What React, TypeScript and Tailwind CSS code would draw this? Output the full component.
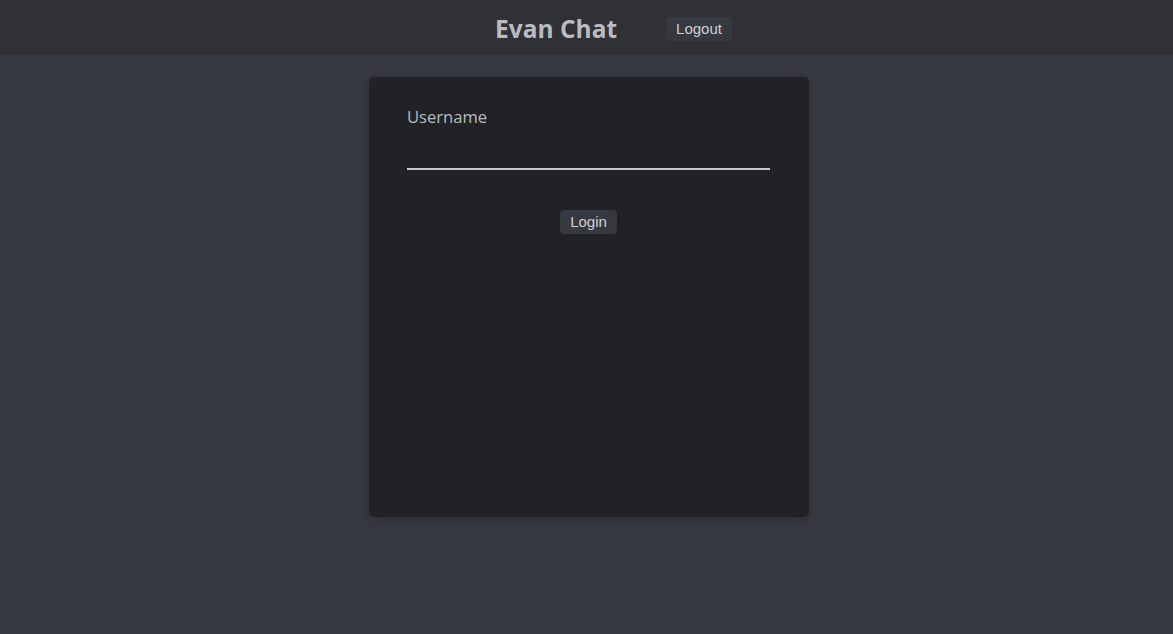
export default function App() {
    return (
        <div className="min-h-[634px] bg-[#36393f] font-['Open_Sans',sans-serif] text-[#b9bbbe]">
            <header className="h-[55px] bg-[#2f3136] flex items-center justify-center pt-[3px]">
                <div className="flex items-center gap-[49px] ml-[54px]">
                    <h1 className="text-[24.5px] font-bold text-[#b9bbbe] leading-none">
                        Evan Chat
                    </h1>
                    <button className="h-[24px] px-[10px] rounded bg-[#36393f] text-[15px] text-[#cfd0d1] font-['Liberation_Sans',sans-serif]">
                        Logout
                    </button>
                </div>
            </header>
            <main className="flex justify-center pt-[22px] pl-[5px]">
                <div className="w-[440px] h-[440px] bg-[#202225] rounded-[5px] shadow-[0_2px_10px_rgba(0,0,0,0.2)] pl-[38px] pr-[39px] pt-[28px] flex flex-col">
                    <label className="text-[16.6px] text-[#b9bbbe]">Username</label>
                    <input
                        type="text"
                        className="mt-[12px] h-[28px] bg-transparent border-b-2 border-[#c8c8c8] outline-none text-[#dcddde]"
                    />
                    <div className="flex justify-center mt-[40px]">
                        <button className="h-[24px] px-[10px] rounded bg-[#36393f] text-[15px] text-[#cfd0d1] font-['Liberation_Sans',sans-serif]">
                            Login
                        </button>
                    </div>
                </div>
            </main>
        </div>
    );
}
